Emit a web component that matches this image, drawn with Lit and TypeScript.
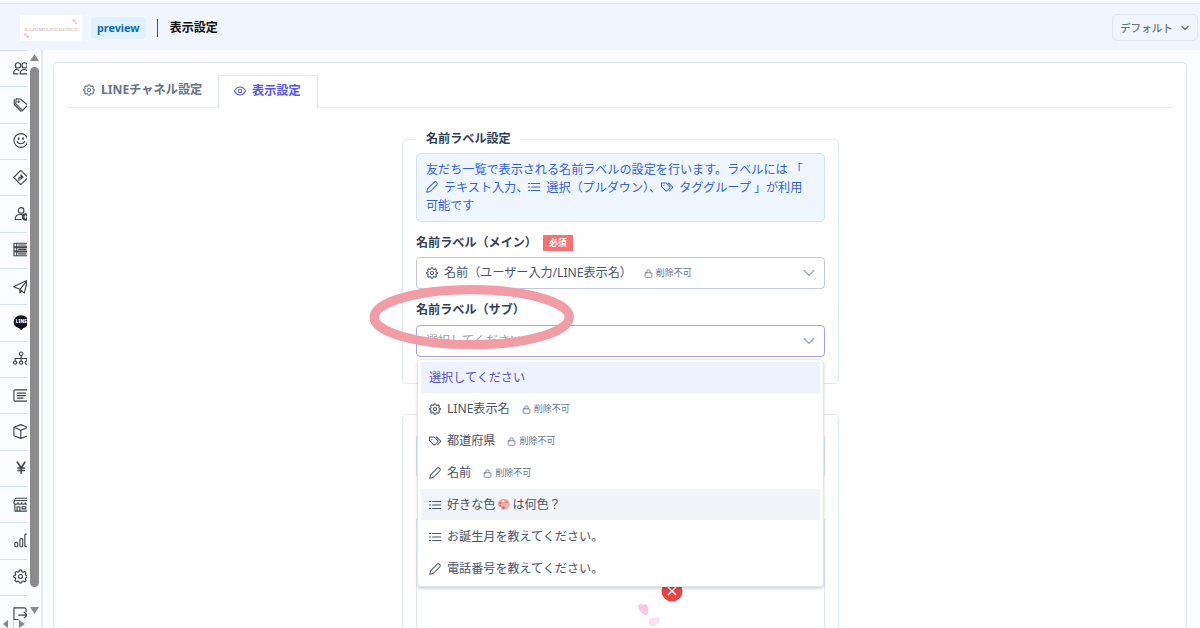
import { LitElement, html, css, svg, nothing } from "lit";
import { customElement, property } from "lit/decorators.js";
import { classMap } from "lit/directives/class-map.js";

const gear = svg`<path d="M9.7 4.2 10.3 1.8h3.4l.6 2.4 2 .9 2.2-1.3 2.4 2.4-1.3 2.2.9 2 2.3.6v2.2l-2.3.7-.9 2 1.3 2.2-2.4 2.4-2.2-1.3-2 .9-.6 2.2h-3.4l-.6-2.2-2-.9-2.2 1.3-2.400-2.400 1.300-2.200-.9-2-2.300-.7V11l2.300-.6.9-2-1.300-2.200 2.400-2.400 2.200 1.300z"/><circle cx="12" cy="12" r="3.200"/>`;

const glyphs: Record<string, unknown> = {
  gear,
  eye: svg`<path d="M1 12C3.500 6.500 7.500 4 12 4s8.500 2.500 11 8c-2.500 5.500-6.500 8-11 8S3.500 17.500 1 12z"/><circle cx="12" cy="12" r="3.500"/>`,
  pencil: svg`<path d="M1.500 22.500l1.500-6.700L16.500 2.300a3 3 0 0 1 4.200 0l1 1a3 3 0 0 1 0 4.200L8.200 21z"/>`,
  list: svg`<path d="M7 5h16.500M7 12h16.500M7 19h16.500M.8 5h2.500M.8 12h2.500M.8 19h2.500"/>`,
  tags: svg`<path d="M1 4v7l8.300 8.500a2 2 0 0 0 2.800 0l5.400-5.500a2 2 0 0 0 0-2.800L10.500 4z"/><path d="M14.500 4l8 7.200a2 2 0 0 1 0 2.800l-6 6"/><path d="M5.500 8.500h.6"/>`,
  lock: svg`<rect x="3" y="10" width="18" height="12" rx="2"/><path d="M7.500 10V6.500a4.500 4.500 0 0 1 9 0V10"/>`,
  chevron: svg`<path d="M2.500 7l9.500 9.500L21.500 7"/>`,
  users: svg`<circle cx="8" cy="7" r="4.200"/><circle cx="18.500" cy="7" r="4.200"/><path d="M1 20.500c0-5 1.500-7 5-7 1.500 0 2.500.5 3.500 1.500M1 20.500h7M11.500 20.500c0-5 2-7 6.500-7s6 2 6 7z"/>`,
  tag: svg`<path d="M5 3l7 .3 11.500 9.700-8.500 8.700L4.500 11z"/><path d="M2 4v8l11 11"/><circle cx="9" cy="7.500" r="1"/>`,
  smile: svg`<circle cx="12.500" cy="12" r="11"/><path d="M6.500 13.500c1.500 5 10.500 5 12 0"/><path d="M9 8v2M16 8v2" stroke-width="2.600"/>`,
  direction: svg`<path d="M12.500 .7L24 12 12.500 23.300 1 12z"/><path stroke-width="2.200" d="M9.500 16.500v-3.200c0-1.200.8-2 2-2H15M12.500 8l3.200 3.300-3.200 3"/>`,
  userPlus: svg`<circle cx="13" cy="7" r="4.500"/><path d="M3.500 21.500c0-5 2.500-8 8-8 1.500 0 2.500.2 3.500.7M3.500 21.500H13"/><circle cx="20" cy="17.500" r="5" fill="currentColor"/><path d="M17.500 17.500h5M20 15v5" stroke="#fff" stroke-width="1.300"/>`,
  forms: svg`<path d="M1.500 2h22v5.500h-22zM1.500 9h22v5.500h-22zM1.500 16h22v6h-22zM6 2v20M9 4.700h12M9 11.700h12M9 19h12"/>`,
  send: svg`<path d="M1 12.500L23.500 1.500 18 22.500 11 16.500zM11 16.500L23.500 1.500M11 16.500v5.500l3.500-3"/>`,
  tree: svg`<circle cx="13" cy="4.500" r="2.900"/><circle cx="3.500" cy="18.500" r="2.600"/><circle cx="13" cy="18.500" r="2.600"/><circle cx="22" cy="18.500" r="2.600"/><path d="M13 7.500V16M3.500 15.500v-3.500H22v3.500"/>`,
  article: svg`<rect x="1.500" y="3" width="25" height="18" rx="2"/><path stroke-width="2" d="M7 8h13M7 12h13M7 16h9"/>`,
  box: svg`<path d="M12.500 1l11 4.200v13.600l-11 4.200-11-4.200V5.200zM1.500 5.200l11 4.800 11-4.800M12.500 10v13"/>`,
  yen: svg`<path stroke-width="2.600" d="M7 3.500l6 9 6-9M13 12.500V21M8 12.700h10M8 16.700h10"/>`,
  shop: svg`<path d="M4 2h19l2 7c0 3.500-5.500 3.500-5.500 0 0 3.500-5.500 3.500-5.500 0 0 3.500-6 3.500-6 0C8 12.500 1.500 12.500 1.500 9zM3 12v10.500h22V12M6.500 22v-6.500h4.500V22M14.500 15.500h6v3.500h-6zM5 5.500h18"/>`,
  chart: svg`<rect x="3" y="15" width="4.500" height="7" rx="1.800"/><rect x="11" y="9" width="4.500" height="13" rx="1.800"/><rect x="19" y="1.500" width="5" height="20.500" rx="1.500"/>`,
  exit: svg`<path d="M8 21.500H1.500V3H18a3 3 0 0 1 3 3v3M9 14.500h14M18 10l5 4.500-5 4.500"/>`,
};

@customElement("ui-icon")
class UiIcon extends LitElement {
  static styles = css`
    :host { display: inline-flex; flex: none; width: 12px; height: 12px; }
    svg { display: block; width: 100%; height: 100%; overflow: visible; fill: none; stroke: currentColor; stroke-linecap: round; stroke-linejoin: round; }
    text { fill: #fff; stroke: none; font: 900 7px "Noto Sans", sans-serif; }
  `;
  @property() name = "";
  @property() weight = "2.1";
  render() {
    if (this.name === "line")
      return html`<svg viewBox="0 0 24 24"><ellipse cx="13" cy="11" rx="12" ry="10.500" fill="#111" stroke="none"/><path d="M8.500 19l4.500 5.500 6-6.500z" fill="#111" stroke="none"/><text x="4.500" y="13.500" textLength="17.500">LINE</text></svg>`;
    return html`<svg viewBox="0 0 24 24" stroke-width=${this.weight}>${glyphs[this.name]}</svg>`;
  }
}

const nav = ["users", "tag", "smile", "direction", "userPlus", "forms", "send", "line", "tree", "article", "box", "yen", "shop", "chart", "gear", "exit"];

interface Option { icon?: string; label: unknown; locked?: boolean; state?: string }

const palette = html`<svg class="palette" viewBox="0 0 14 14"><path d="M7.500 1C3.500 1 .8 3.500.8 6.300c0 2 1.300 2.700 2.500 2.900 1.500.3.800 1.600 1.500 2.800 1.500 2.200 8.700.2 8.700-5.500C13.500 3 11 1 7.500 1z" fill="#f4a79d"/><circle cx="3.500" cy="5.500" r="1.200" fill="#e0567c"/><circle cx="6.500" cy="3.400" r="1.200" fill="#fbd1c0"/><circle cx="10.300" cy="4.300" r="1.200" fill="#ee7d6f"/><circle cx="10.500" cy="8" r="1.200" fill="#f9c9b4"/><circle cx="7" cy="10.500" r="1.300" fill="#9b6bc8"/><circle cx="3.400" cy="8.300" r="1" fill="#7d7ccf"/></svg>`;

const options: Option[] = [
  { label: "選択してください", state: "selected" },
  { icon: "gear", label: "LINE表示名", locked: true },
  { icon: "tags", label: "都道府県", locked: true },
  { icon: "pencil", label: "名前", locked: true },
  { icon: "list", label: html`好きな色${palette}は何色？`, state: "hover" },
  { icon: "list", label: "お誕生月を教えてください。" },
  { icon: "pencil", label: "電話番号を教えてください。" },
];

@customElement("app-root")
class AppRoot extends LitElement {
  static styles = css`
    :host { display: block; height: 628px; overflow: hidden; position: relative; background: #fafcff; color: #475569; font: 12.100px/18px "Noto Sans", "Noto Sans CJK JP", sans-serif; }
    * { box-sizing: border-box; }
    .topbar { height: 50px; display: flex; align-items: center; padding: 3px 2px 1px 20px; border-top: 3px solid #f8fafd; background: #f1f5fd; box-shadow: inset 0 1px #e3e8ef; }
    .logo { width: 62px; height: 26px; background: #fff; display: block; }
    .logo text { font: 5px "Liberation Serif", serif; fill: #c9a9a9; }
    .badge { margin-left: 9px; height: 22px; padding: 0 6px; border-radius: 4px; background: #e0f2fe; color: #0f6ea3; font-weight: 700; font-size: 10.800px; line-height: 22px; }
    .divider { width: 1px; height: 18px; margin: 0 12px 0 11px; background: #555; }
    .title { color: #111; font-weight: 700; }
    .mode { margin-left: auto; width: 86px; height: 27px; border: 1px solid #e2e8f0; border-radius: 5px; display: flex; align-items: center; justify-content: space-between; padding: 0 8px 0 7px; font-size: 10.600px; font-weight: 500; color: #64748b; }
    .mode ui-icon { width: 8px; height: 8px; }
    .body { display: flex; height: 578px; }
    .side { width: 43px; display: flex; border-right: 2px solid #e6ebf2; flex: none; }
    .nav { width: 27px; overflow: hidden; display: grid; grid-auto-rows: 36.350px; color: #3f4247; }
    .nav div { border-top: 1px solid #cfe1f2; padding: 0 0 1px 13px; display: flex; align-items: center; }
    .nav ui-icon { width: 15px; height: 15px; }
    .scroll { width: 14px; padding: 4px 0 0 1px; display: flex; flex-direction: column; align-items: center; }
    .up, .down { width: 9px; height: 7px; background: #8a8a8a; flex: none; }
    .up { clip-path: polygon(50% 0, 100% 100%, 0 100%); }
    .down { clip-path: polygon(0 0, 100% 0, 50% 100%); margin-top: 20px; }
    .thumb { width: 9px; height: 520px; margin-top: 6px; border-radius: 5px; background: #8b8b8b; flex: none; }
    .hscroll { position: absolute; left: 0; bottom: 0; width: 27px; height: 8px; background: #fafcff; display: block; }
    .card { margin: 12px 13px 0 10px; flex: 1; min-width: 0; border: 1.500px solid #e2e8f0; border-bottom: 0; border-radius: 5px 5px 0 0; background: #fff; padding: 12px 14px 0 14px; }
    .tabs { display: flex; height: 33px; border-bottom: 1px solid #e2e8f0; font-weight: 700; font-size: 12.200px; color: #64748b; }
    .tab { display: flex; align-items: center; gap: 6px; height: 33px; width: 150px; padding: 0 0 3px 15px; }
    .tab.active { color: #5b54e6; background: #fff; border: 1px solid #e2e8f0; border-bottom: 0; width: 100px; padding-bottom: 2px; }
    .form { width: 437px; margin: 22px auto 0 334px; }
    fieldset { margin: 0; min-width: 0; border: 1px solid #e2e8f0; border-radius: 5px; padding: 0 13px; height: 254px; }
    legend { padding: 0 10px; height: 18px; font-weight: 700; color: #334155; }
    .info { margin-top: 5px; height: 69px; border: 1px solid #cfe1fb; border-radius: 5px; background: #eff6ff; color: #2f63dc; padding: 7px 9px; line-height: 18.200px; white-space: nowrap; }
    .info ui-icon { vertical-align: -1px; margin-right: 6px; }
    .label { display: flex; align-items: center; height: 18px; margin: 12px 0 5px; color: #334155; font-weight: 700; }
    .main + .label { margin: 12px 0 6px; }
    .req { background: #f87171; color: #fff; font-size: 8.700px; height: 16px; width: 30px; line-height: 16px; text-align: center; margin-left: 6px; }
    .select { height: 32px; border: 1px solid #c3cad6; border-radius: 4px; display: flex; align-items: center; padding: 0 9px; }
    .select.open { border-color: #a5a2f2; position: relative; }
    .select .arrow { margin-left: auto; color: #94a3b8; }
    .placeholder { color: #9aa5b5; }
    .name { margin-left: 6px; display: inline-flex; align-items: center; }
    .lock { display: inline-flex; align-items: center; gap: 3px; margin-left: 12px; font-size: 9px; color: #64748b; }
    .lock ui-icon { width: 9px; height: 9px; }
    .main .lock { margin-left: 12px; }
    .menu { position: absolute; top: 33px; left: 0; width: 407px; height: 228px; padding: 2px 3px; border: 1px solid #e2e8f0; border-radius: 4px; background: #fff; box-shadow: 0 2px 3px #0000002b; z-index: 2; }
    .option { height: 31px; margin-bottom: .850px; display: flex; align-items: center; padding-left: 8px; }
    .selected { background: #eef2ff; color: #5b4fd0; }
    .selected .name { margin-left: 0; }
    .hover { background: #f1f5f9; }
    .palette { width: 13px; height: 13px; margin: 0 2px 0 2px; }
    .second { margin-top: 30px; height: 260px; padding-top: 1px; }
    .second .info { margin-top: 17px; height: 46px; }
    .preview { height: 220px; margin-top: 40px; border: 1px solid #e2e8f0; padding: 64px 0 0 218px; }
    .art { display: block; width: 60px; height: 48px; }
    .ring { position: absolute; left: 369px; top: 285px; width: 206px; height: 65px; z-index: 3; }
  `;

  private lock() {
    return html`<span class="lock"><ui-icon name="lock" weight="2.2"></ui-icon>削除不可</span>`;
  }

  render() {
    return html`
      <header class="topbar">
        <svg class="logo" viewBox="0 0 62 26"><text x="4.500" y="15.500" textLength="53">KAZUMI LIFE DESIGN</text><g fill="#f9c3d3"><circle cx="54" cy="5.500" r="1.600"/><circle cx="56" cy="8" r="1.200"/><circle cx="5" cy="19.500" r="1.300"/><circle cx="7.500" cy="21.500" r="1.500"/></g></svg>
        <span class="badge">preview</span><span class="divider"></span><span class="title">表示設定</span>
        <div class="mode">デフォルト<ui-icon name="chevron" weight="4"></ui-icon></div>
      </header>
      <div class="body">
        <aside class="side">
          <nav class="nav">${nav.map((n) => html`<div><ui-icon name=${n} weight="1.8"></ui-icon></div>`)}</nav>
          <div class="scroll"><i class="up"></i><i class="thumb"></i><i class="down"></i></div>
        </aside>
        <main class="card">
          <div class="tabs">
            <div class="tab"><ui-icon name="gear"></ui-icon>LINEチャネル設定</div>
            <div class="tab active"><ui-icon name="eye"></ui-icon>表示設定</div>
          </div>
          <div class="form">
            <fieldset>
              <legend>名前ラベル設定</legend>
              <div class="info">友だち一覧で表示される名前ラベルの設定を行います。ラベルには 「<br /><ui-icon name="pencil"></ui-icon>テキスト入力、<ui-icon name="list"></ui-icon>選択（プルダウン）、<ui-icon name="tags"></ui-icon>タググループ 」が利用<br />可能です</div>
              <div class="label">名前ラベル（メイン）<span class="req">必須</span></div>
              <div class="select main"><ui-icon name="gear"></ui-icon><span class="name">名前（ユーザー入力/LINE表示名）</span>${this.lock()}<ui-icon class="arrow" name="chevron" weight="2.4"></ui-icon></div>
              <div class="label">名前ラベル（サブ）</div>
              <div class="select open">
                <span class="placeholder">選択してください</span><ui-icon class="arrow" name="chevron" weight="2.4"></ui-icon>
                <div class="menu">
                  ${options.map((o) => html`<div class=${classMap({ option: true, selected: o.state === "selected", hover: o.state === "hover" })}>
                    ${o.icon ? html`<ui-icon name=${o.icon}></ui-icon>` : nothing}<span class="name">${o.label}</span>${o.locked ? this.lock() : nothing}
                  </div>`)}
                </div>
              </div>
            </fieldset>
            <fieldset class="second">
              <div class="info"></div>
              <div class="preview">
                <svg class="art" viewBox="0 0 60 48"><circle cx="37" cy="7" r="10.500" fill="#e94343"/><path d="M33 3l8 8M41 3l-8 8" stroke="#fff" stroke-width="1.500"/><path d="M3 22q2-4 5-1 4-2 5 2 1 5-1 9-8-3-9-10z" fill="#fcc5e2"/><path d="M14 35q3-2 5-1 4-3 6 1-1 5-4 6-3 3-6 1-2-3-1-7z" fill="#fde0f1"/></svg>
              </div>
            </fieldset>
          </div>
        </main>
      </div>
      <svg class="hscroll" viewBox="0 0 27 8"><path d="M8 0v8L3 4zM19 0v8l6-4z" fill="#858585"/><path d="M13.500 0v8" stroke="#ccc"/></svg>
      <svg class="ring" viewBox="0 0 206 65"><ellipse cx="102.700" cy="32.200" rx="97.500" ry="27.500" fill="none" stroke="#f19ca7" stroke-width="9.300"/></svg>
    `;
  }
}
